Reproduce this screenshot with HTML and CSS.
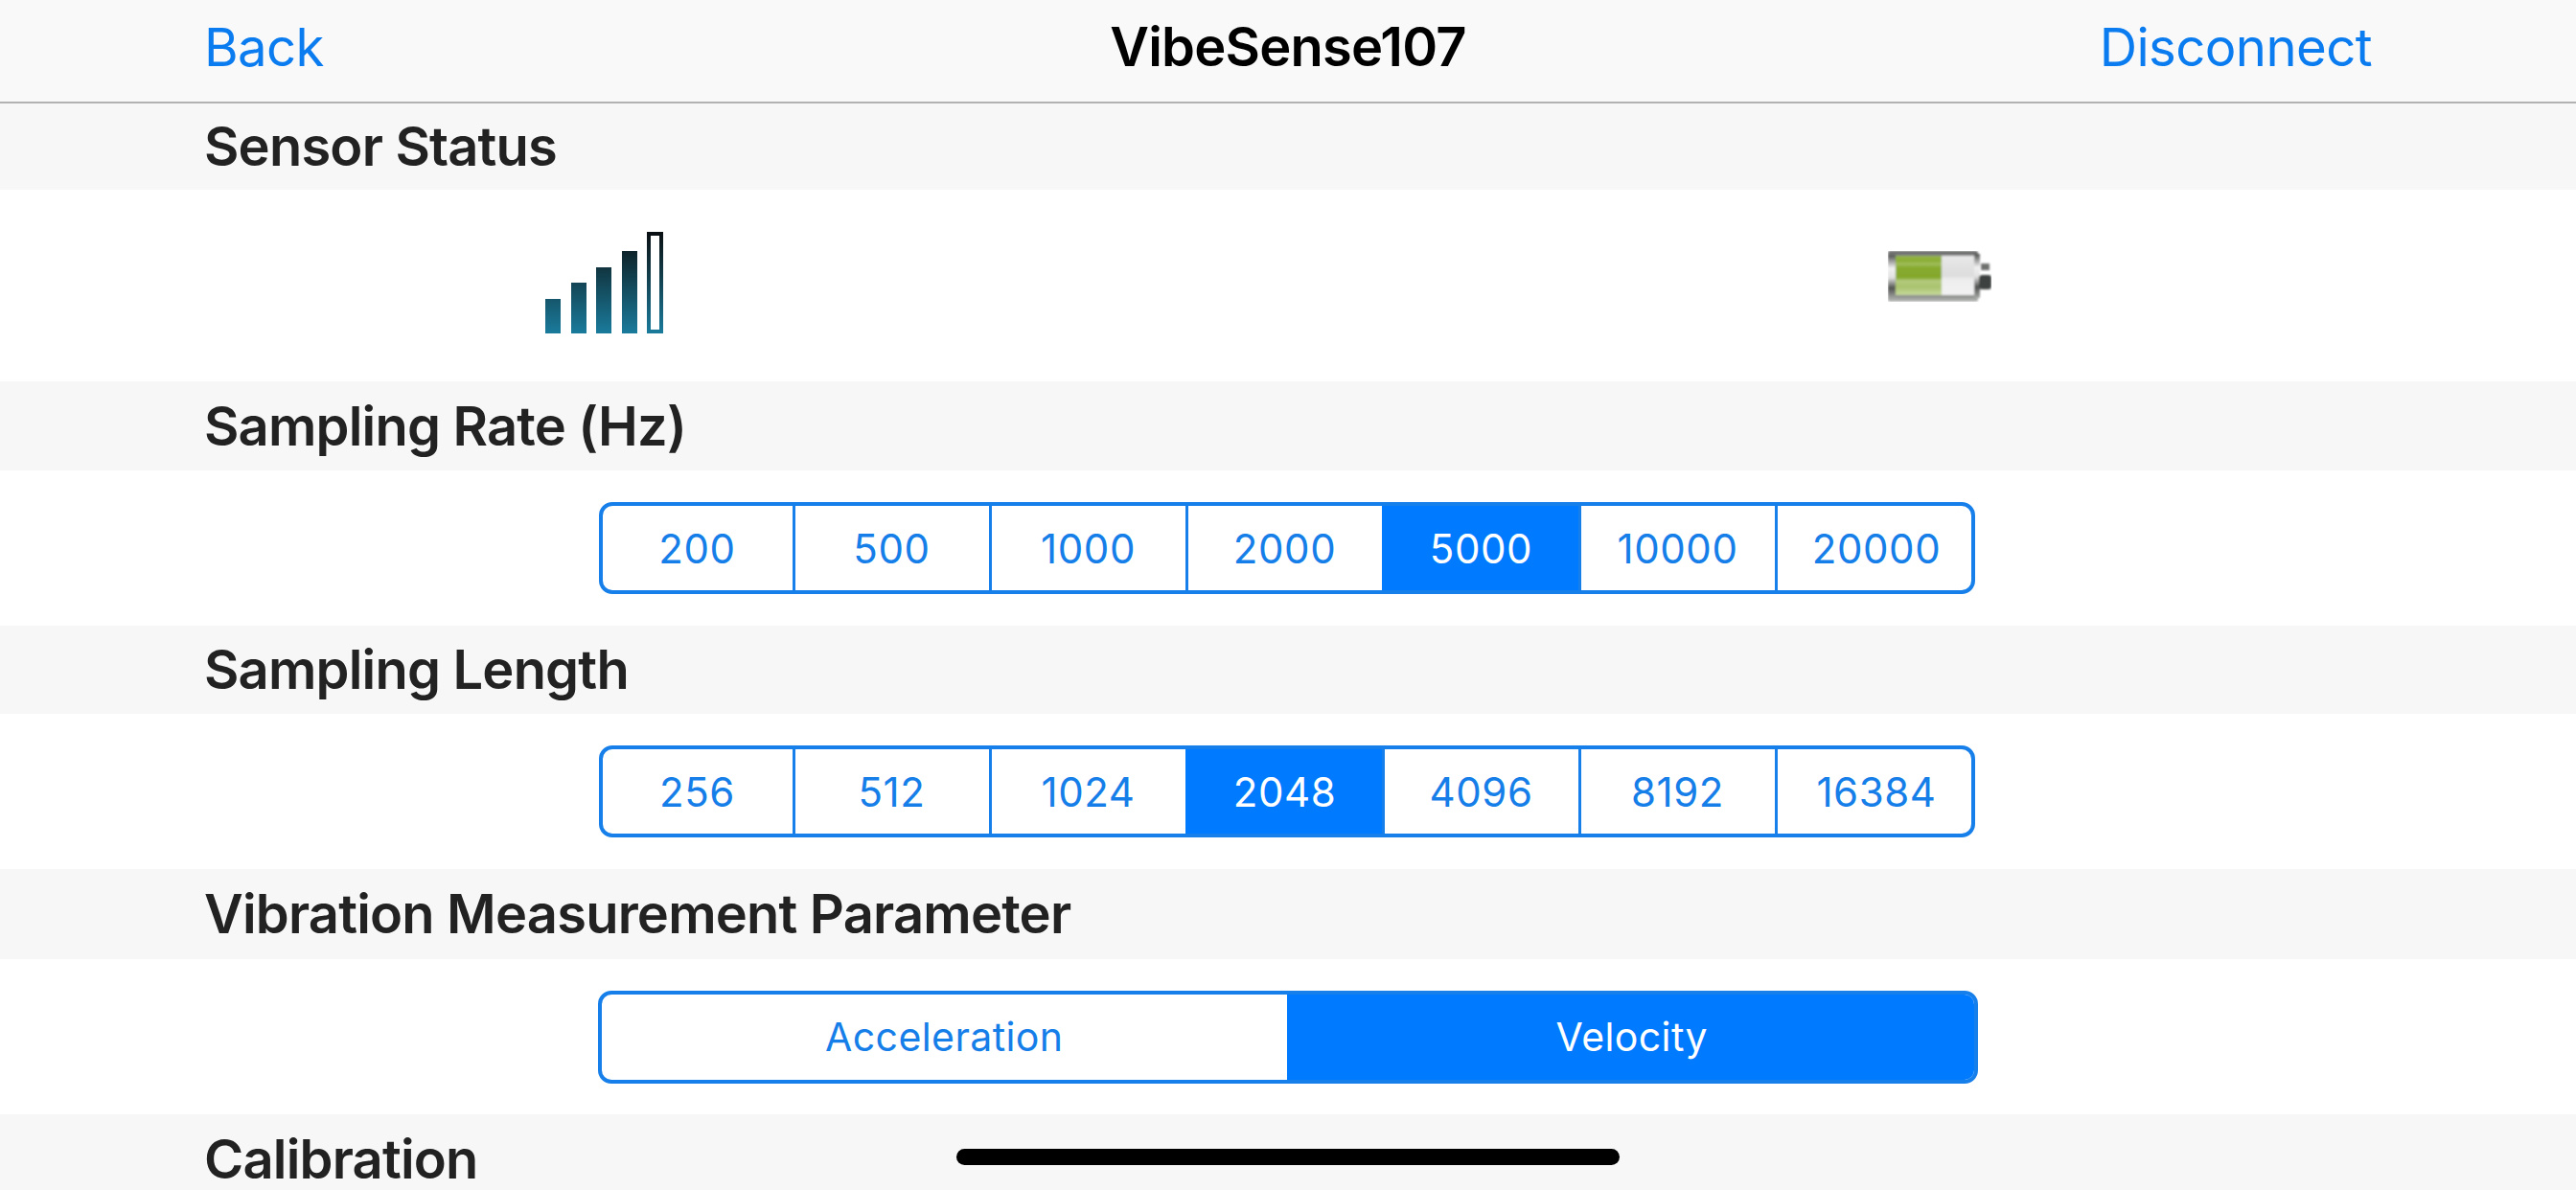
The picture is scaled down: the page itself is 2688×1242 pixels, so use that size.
FILE: index.html
```html
<!DOCTYPE html>
<html lang="en">
<head>
  <meta charset="UTF-8" />
  <title>VibeSense107</title>
  <link rel="stylesheet" href="styles.css">
</head>
<body>

  <div class="navbar">
    <a class="nav-link">Back</a>
    <span class="nav-title">VibeSense107</span>
    <a class="nav-link nav-right">Disconnect</a>
  </div>

  <div class="section-title title-status">Sensor Status</div>
  <div class="status-row">
    <svg class="signal-icon" width="123" height="106" viewBox="0 0 123 106">
      <defs>
        <linearGradient id="barFade" gradientUnits="userSpaceOnUse" x1="0" y1="0" x2="0" y2="106">
          <stop offset="0" stop-color="#0a0f12"/>
          <stop offset="0.35" stop-color="#113540"/>
          <stop offset="1" stop-color="#1a7b9c"/>
        </linearGradient>
      </defs>
      <rect x="0" y="70" width="16" height="36" fill="url(#barFade)"/>
      <rect x="27" y="53" width="16" height="53" fill="url(#barFade)"/>
      <rect x="53" y="37" width="16" height="69" fill="url(#barFade)"/>
      <rect x="80" y="20" width="16" height="86" fill="url(#barFade)"/>
      <rect x="108" y="2" width="13" height="102" fill="#fff" stroke="url(#barFade)" stroke-width="4"/>
    </svg>
    <svg class="battery-icon" width="108" height="53" viewBox="0 0 108 53">
      <defs>
        <linearGradient id="caseFade" x1="0" y1="0" x2="0" y2="1">
          <stop offset="0" stop-color="#5c5e5c"/>
          <stop offset="0.1" stop-color="#8a8c8a"/>
          <stop offset="0.88" stop-color="#8a8c8a"/>
          <stop offset="1" stop-color="#bcbebc"/>
        </linearGradient>
        <linearGradient id="edgeFade" x1="0" y1="0" x2="0" y2="1">
          <stop offset="0" stop-color="#4e504e"/>
          <stop offset="0.3" stop-color="#f0f1f0"/>
          <stop offset="0.52" stop-color="#e0e1e0"/>
          <stop offset="0.75" stop-color="#505250"/>
          <stop offset="1" stop-color="#a8aaa8"/>
        </linearGradient>
        <linearGradient id="greenFade" x1="0" y1="0" x2="0" y2="1">
          <stop offset="0" stop-color="#93b344"/>
          <stop offset="0.14" stop-color="#8aad34"/>
          <stop offset="0.2" stop-color="#a3bf60"/>
          <stop offset="0.3" stop-color="#87aa2e"/>
          <stop offset="0.55" stop-color="#84a82c"/>
          <stop offset="0.64" stop-color="#b4cb80"/>
          <stop offset="0.78" stop-color="#a8c26c"/>
          <stop offset="1" stop-color="#c6d89c"/>
        </linearGradient>
        <linearGradient id="emptyFade" x1="0" y1="0" x2="0" y2="1">
          <stop offset="0" stop-color="#e8e8e8"/>
          <stop offset="0.5" stop-color="#dcdddc"/>
          <stop offset="0.62" stop-color="#eeeeee"/>
          <stop offset="1" stop-color="#f1f2f1"/>
        </linearGradient>
        <filter id="soft"><feGaussianBlur stdDeviation="0.8"/></filter>
      </defs>
      <g filter="url(#soft)">
        <rect x="0" y="0" width="94" height="53" rx="2" fill="url(#caseFade)"/>
        <rect x="0" y="4" width="8" height="46" fill="url(#edgeFade)"/>
        <rect x="90" y="3" width="6" height="46" fill="url(#edgeFade)"/>
        <rect x="8" y="5" width="48" height="41" fill="url(#greenFade)"/>
        <rect x="56" y="5" width="34" height="41" fill="url(#emptyFade)"/>
        <rect x="97" y="13" width="9" height="7" fill="#6e706e"/>
        <rect x="95" y="25" width="13" height="15" rx="3" fill="#3e4240"/>
      </g>
    </svg>
  </div>

  <div class="section-title title-rate">Sampling Rate (Hz)</div>
  <div class="section-body body-rate">
    <div class="segment segment-seven">
      <div class="seg-item">200</div>
      <div class="seg-item">500</div>
      <div class="seg-item">1000</div>
      <div class="seg-item">2000</div>
      <div class="seg-item active">5000</div>
      <div class="seg-item">10000</div>
      <div class="seg-item">20000</div>
    </div>
  </div>

  <div class="section-title title-length">Sampling Length</div>
  <div class="section-body body-length">
    <div class="segment segment-seven">
      <div class="seg-item">256</div>
      <div class="seg-item">512</div>
      <div class="seg-item">1024</div>
      <div class="seg-item active">2048</div>
      <div class="seg-item">4096</div>
      <div class="seg-item">8192</div>
      <div class="seg-item">16384</div>
    </div>
  </div>

  <div class="section-title title-param">Vibration Measurement Parameter</div>
  <div class="section-body body-param">
    <div class="segment segment-wide">
      <div class="seg-item">Acceleration</div>
      <div class="seg-item active">Velocity</div>
    </div>
  </div>

  <div class="section-title title-calibration">Calibration</div>

  <div class="home-bar"></div>

</body>
</html>
```

FILE: styles.css
```css
html, body {
  height: 100%;
}

body {
  margin: 0;
  height: 1242px;
  overflow: hidden;
  position: relative;
  background: #ffffff;
  font-family: 'Inter', 'Liberation Sans', sans-serif;
  color: #222222;
}

.navbar {
  display: grid;
  grid-template-columns: 1fr auto 1fr;
  align-items: center;
  box-sizing: border-box;
  height: 108px;
  padding: 0 213px 8px;
  background: #f9f9f9;
  border-bottom: 2px solid #b2b2b2;
}

.nav-link {
  color: #0a7cf0;
  font-size: 54.5px;
  letter-spacing: -0.6px;
}

.nav-right {
  text-align: right;
}

.nav-title {
  color: #000000;
  font-size: 56px;
  font-weight: 600;
  letter-spacing: -0.8px;
}

.section-title {
  display: flex;
  align-items: center;
  padding-left: 213px;
  background: #f7f7f7;
  font-size: 56px;
  font-weight: 600;
  letter-spacing: -0.8px;
}

.title-status { height: 90px; }
.title-rate { height: 93px; }
.title-length { height: 92px; }
.title-param { height: 94px; }
.title-calibration { height: 65px; padding-top: 14px; }

.status-row {
  display: flex;
  justify-content: space-between;
  align-items: flex-start;
  height: 200px;
  padding: 0 610px 0 569px;
}

.signal-icon {
  margin-top: 44px;
}

.battery-icon {
  margin-top: 64px;
}

.section-body {
  display: flex;
  justify-content: center;
  align-items: center;
}

.body-rate { height: 162px; }
.body-length { height: 162px; }
.body-param { height: 162px; }

.body-rate, .body-length {
  padding-right: 3px;
}

.segment {
  display: flex;
  box-sizing: border-box;
  width: 1436px;
  height: 96px;
  border: 4px solid #177fe9;
  border-radius: 14px;
  overflow: hidden;
  background: #ffffff;
}

/* the dividers sit a little left of an even split */
.segment-seven {
  display: grid;
  grid-template-columns: 198px repeat(5, 205px) 1fr;
}

.segment-wide {
  width: 1440px;
  height: 97px;
}

.seg-item {
  flex: 1;
  display: flex;
  justify-content: center;
  align-items: center;
  color: #157ee8;
  font-size: 42px;
  letter-spacing: 0.6px;
  border-left: 3px solid #177fe9;
}

.segment-seven .seg-item:last-child {
  padding-left: 5px;
}

.segment-wide .seg-item {
  font-size: 41px;
  letter-spacing: 0.4px;
}

.seg-item:first-child {
  border-left: none;
}

.seg-item.active {
  background: #007aff;
  color: #ffffff;
  border-left-color: #007aff;
}

.home-bar {
  position: absolute;
  left: 998px;
  top: 1199px;
  width: 692px;
  height: 17px;
  border-radius: 9px;
  background: #000000;
}
```
